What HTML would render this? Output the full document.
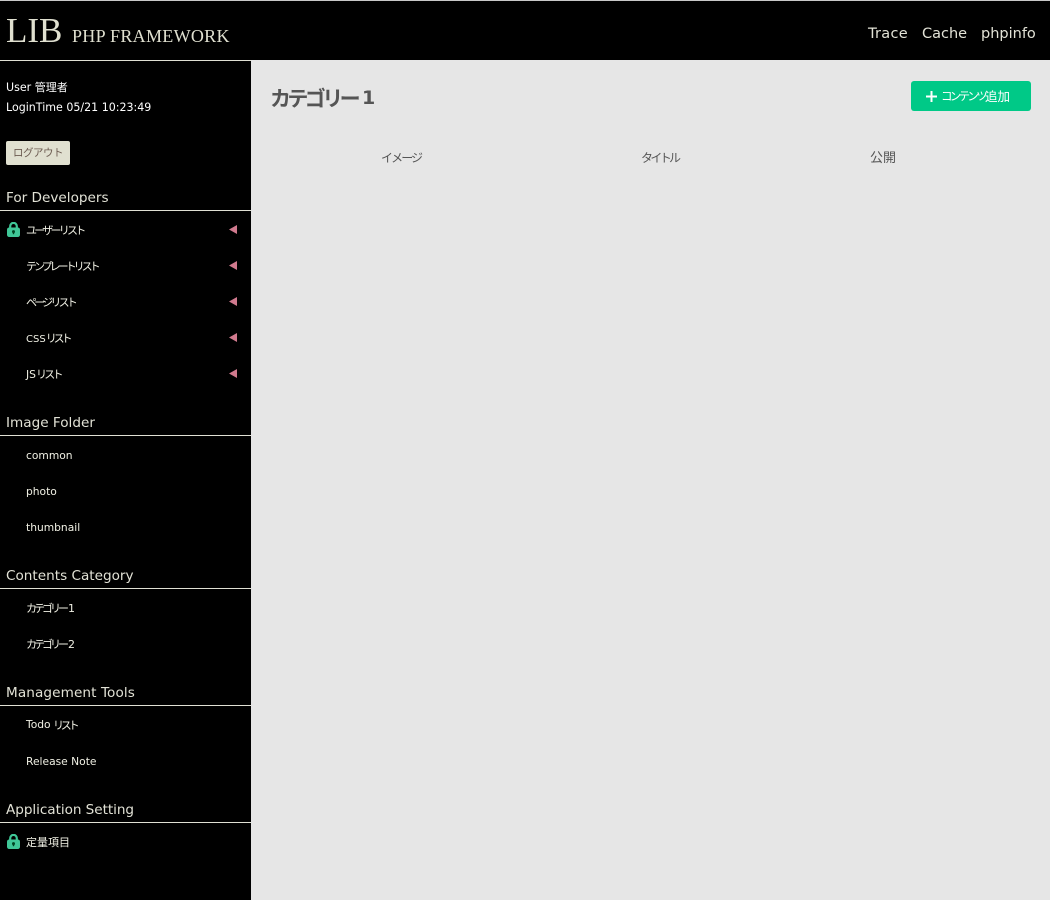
<!DOCTYPE html>
<html lang="ja">
<head>
<meta charset="utf-8">
<title>LIB PHP FRAMEWORK</title>
<style>
html,body{margin:0;padding:0;width:1050px;height:900px;overflow:hidden;background:#e6e6e6}
body{position:relative;font-family:"DejaVu Sans","Noto Sans CJK JP",sans-serif}
.a{position:absolute;white-space:nowrap;line-height:1}
#top{position:absolute;left:0;top:0;width:1050px;height:60px;background:#000;border-top:1px solid #c8c8c8;box-sizing:border-box}
#side{position:absolute;left:0;top:60px;width:251px;height:840px;background:#000;border-top:1px solid #e0e0d4;box-sizing:border-box}
.logo{font-family:"Liberation Serif",serif;color:#e0e0d0}
.nav{font-size:14.5px;color:#e2e2d6;top:27px}
.u{font-size:11.05px;color:#fff}
.h{left:6px;font-size:13.6px;color:#e2e2d6}
.l{position:absolute;left:0;width:251px;height:1px;background:#e0e0d4}
.m{left:26px;font-size:11px;color:#f0f0e4}
.m.e{font-size:10.7px}
.t{position:absolute;left:229px;width:8px;height:9px;background:#d07a8e;clip-path:polygon(0 50%,100% 0,100% 100%)}
.lock{position:absolute;left:7px;width:13px;height:15px}
.th{font-size:12px;color:#555;top:152px}
</style>
</head>
<body>
<div id="top"></div>
<div id="side"></div>

<div class="a logo" style="left:6px;top:13px;font-size:35px">LIB</div>
<div class="a logo" style="left:72px;top:27px;font-size:18px;letter-spacing:.3px">PHP FRAMEWORK</div>

<div class="a nav" style="left:868px;letter-spacing:.3px">Trace</div>
<div class="a nav" style="left:922px">Cache</div>
<div class="a nav" style="left:981px">phpinfo</div>

<div class="a u" style="left:6px;top:82px">User 管理者</div>
<div class="a u" style="left:6px;top:102px">LoginTime 05/21 10:23:49</div>

<div style="position:absolute;left:6px;top:141px;width:64px;height:24px;background:#e0e0d0;border-radius:2px"></div>
<div class="a" style="left:13px;top:148px;font-size:10.5px;color:#6b5a50;letter-spacing:-.5px">ログアウト</div>

<div class="a h" style="top:192px">For Developers</div>
<div class="l" style="top:210px"></div>
<svg class="lock" style="top:222px" viewBox="0 0 13 15"><path d="M3.2 6V4.2a3.3 3.3 0 0 1 6.6 0V6" fill="none" stroke="#3fc797" stroke-width="2.2"/><rect x="0" y="5.5" width="13" height="9.5" rx="2.2" fill="#3fc797"/><circle cx="6.5" cy="9.6" r="1.5" fill="#042"/><rect x="5.8" y="9.6" width="1.4" height="2.6" fill="#042"/></svg>
<div class="a m" style="top:225px;letter-spacing:-2.75px">ユーザーリスト</div><div class="t" style="top:225px"></div>
<div class="a m" style="top:261px;letter-spacing:-3px">テンプレートリスト</div><div class="t" style="top:261px"></div>
<div class="a m" style="top:297px;letter-spacing:-2.8px">ページリスト</div><div class="t" style="top:297px"></div>
<div class="a m" style="top:333px;font-size:10px">CSS<span style="font-size:11px;letter-spacing:-3.1px">リスト</span></div><div class="t" style="top:333px"></div>
<div class="a m" style="top:369px;font-size:10.7px">JS<span style="font-size:11px;letter-spacing:-2.7px">リスト</span></div><div class="t" style="top:369px"></div>

<div class="a h" style="top:417px">Image Folder</div>
<div class="l" style="top:435px"></div>
<div class="a m e" style="top:451px">common</div>
<div class="a m e" style="top:487px">photo</div>
<div class="a m e" style="top:523px">thumbnail</div>

<div class="a h" style="top:570px">Contents Category</div>
<div class="l" style="top:588px"></div>
<div class="a m" style="top:603px;letter-spacing:-3px">カテゴリー</div><div class="a m" style="top:603px;left:68px">1</div>
<div class="a m" style="top:639px;letter-spacing:-3px">カテゴリー</div><div class="a m" style="top:639px;left:68px">2</div>

<div class="a h" style="top:687px;letter-spacing:.1px">Management Tools</div>
<div class="l" style="top:705px"></div>
<div class="a m e" style="top:720px">Todo</div><div class="a m" style="top:720px;left:53px;letter-spacing:-3.2px">リスト</div>
<div class="a m e" style="top:757px">Release Note</div>

<div class="a h" style="top:804px;letter-spacing:-.05px">Application Setting</div>
<div class="l" style="top:822px"></div>
<svg class="lock" style="top:834px" viewBox="0 0 13 15"><path d="M3.2 6V4.2a3.3 3.3 0 0 1 6.6 0V6" fill="none" stroke="#3fc797" stroke-width="2.2"/><rect x="0" y="5.5" width="13" height="9.5" rx="2.2" fill="#3fc797"/><circle cx="6.5" cy="9.6" r="1.5" fill="#042"/><rect x="5.8" y="9.6" width="1.4" height="2.6" fill="#042"/></svg>
<div class="a m" style="top:837px">定量項目</div>

<div class="a" style="left:270px;top:89px;font-size:21px;font-weight:bold;color:#555;letter-spacing:-3.6px">カテゴリー</div>
<div class="a" style="left:362px;top:89px;font-size:19px;font-weight:bold;color:#555">1</div>

<div style="position:absolute;left:911px;top:81px;width:120px;height:30px;background:#00c987;border-radius:3px"></div>
<svg style="position:absolute;left:926px;top:91px" width="11" height="11" viewBox="0 0 11 11"><path d="M5.5 0v11M0 5.5h11" stroke="#fff" stroke-width="2" fill="none"/></svg>
<div class="a" style="left:941px;top:91px;font-size:11.5px;color:#fff;letter-spacing:-2.7px">コンテンツ</div>
<div class="a" style="left:985px;top:91px;font-size:12.5px;color:#fff">追加</div>

<div class="a th" style="left:381px;letter-spacing:-1.9px">イメージ</div>
<div class="a th" style="left:641px;letter-spacing:-2.65px">タイトル</div>
<div class="a th" style="left:870px;font-size:13px">公開</div>
</body>
</html>
